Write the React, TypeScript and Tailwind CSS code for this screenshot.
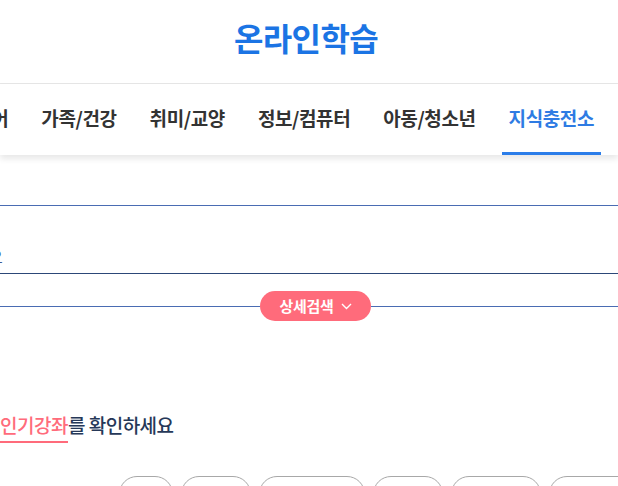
import React from "react";

const navItems = ["외국어", "가족/건강", "취미/교양", "정보/컴퓨터", "아동/청소년", "지식충전소"];
const pills = [
  "w-[54px]",
  "w-[70px]",
  "w-[106px]",
  "w-[70px]",
  "w-[90px]",
  "w-[90px]",
];

export default function App() {
  return (
    <div className="w-[618px] h-[486px] overflow-hidden bg-white font-['Noto_Sans_CJK_KR','Noto_Sans',sans-serif]">
      <header className="h-[84px] flex items-center justify-center border-b border-[#e6e6e6] pb-[10px] pr-[6px]">
        <h1 className="text-[32px] font-bold text-[#1b74e4] tracking-[-0.6px] leading-none">온라인학습</h1>
      </header>
      <nav className="h-[71px] flex justify-end items-stretch gap-[19px] pr-[17px] overflow-hidden shadow-[0_4px_6px_rgba(0,0,0,0.09)] relative">
        {navItems.map((item, i) => {
          const active = i === navItems.length - 1;
          return (
            <div
              key={item}
              className={`shrink-0 px-[7px] flex items-center pt-[1px] border-b-[3px] text-[19px] font-bold tracking-[-0.4px] ${
                active ? "border-[#2b7de9] text-[#2e7be3]" : "border-transparent text-[#333333]"
              }`}
            >
              {item}
            </div>
          );
        })}
      </nav>

      <div className="mt-[50px] border-t border-[#4a6cb3] h-[69px] flex items-center overflow-hidden border-b-[1.5px] border-b-[#2c4878]">
        <span className="ml-[-12px] mt-[32px] text-[16px] text-[#3a5a95]">요</span>
      </div>

      <div className="mt-[17px] flex items-center">
        <div className="w-[260px] h-px bg-[#4a6cb3]" />
        <button className="w-[111px] h-[30px] rounded-full bg-[#ff6b7b] text-white text-[15px] font-bold flex items-center justify-center gap-[7px] tracking-[-0.3px]">
          상세검색
          <svg width="11" height="7" viewBox="0 0 11 7" fill="none">
            <polyline points="1,1 5.5,5.5 10,1" stroke="white" strokeWidth="1.4" fill="none" />
          </svg>
        </button>
        <div className="flex-1 h-px bg-[#4a6cb3]" />
      </div>

      <div className="mt-[91px] flex">
        <div className="text-[19px] leading-[26px] text-[#263858] tracking-[-0.5px] whitespace-nowrap font-medium">
          <span className="text-[#ff6b7b] border-b-2 border-[#ff6b7b] pb-[3px]">인기강좌</span>를 확인하세요
        </div>
      </div>

      <div className="mt-[38px] flex gap-[8px] pl-[119px]">
        {pills.map((w, i) => (
          <div key={i} className={`${w} h-[36px] shrink-0 rounded-[18px] border border-[#a8a8a8]`} />
        ))}
      </div>
    </div>
  );
}
